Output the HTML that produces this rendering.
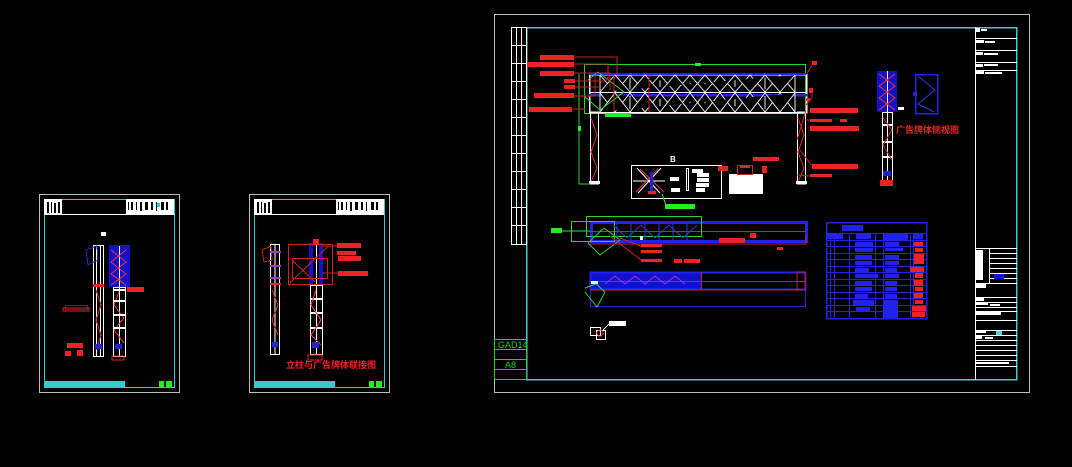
<!DOCTYPE html>
<html><head><meta charset="utf-8"><style>
html,body{margin:0;padding:0;background:#000;}
svg{display:block}
text{font-family:"Liberation Sans","Noto Sans CJK SC",sans-serif}
</style></head><body>
<svg width="1072" height="467" viewBox="0 0 1072 467" xmlns="http://www.w3.org/2000/svg" shape-rendering="crispEdges">
<rect width="1072" height="467" fill="#000"/>

<!-- ============ SHEET 1 ============ -->
<g>
<rect x="39.5" y="194.5" width="140" height="198" fill="none" stroke="#bbb"/>
<rect x="44.5" y="199.5" width="130" height="188" fill="none" stroke="#3cc"/>
<rect x="44" y="199" width="18" height="15" fill="#fff"/>
<g fill="#000"><rect x="47" y="202" width="2" height="11"/><rect x="51" y="202" width="1" height="11"/><rect x="54" y="203" width="2" height="10"/><rect x="58" y="202" width="2" height="11"/></g>
<rect x="126" y="199" width="48" height="15" fill="#fff"/>
<g fill="#000"><rect x="128" y="202" width="1" height="8"/><rect x="131" y="202" width="2" height="8"/><rect x="136" y="202" width="1" height="8"/><rect x="140" y="202" width="2" height="9"/><rect x="145" y="202" width="3" height="8"/><rect x="151" y="202" width="2" height="8"/><rect x="156" y="202" width="1" height="9"/><rect x="161" y="202" width="3" height="8"/><rect x="166" y="202" width="2" height="8"/></g>
<rect x="157" y="203" width="3" height="4" fill="#3cc"/>
<line x1="44" y1="214.5" x2="174" y2="214.5" stroke="#fff"/>
<rect x="44" y="381" width="81" height="6" fill="#3cc"/>
<rect x="159" y="381" width="5" height="7" fill="#2e2"/><rect x="166" y="381" width="6" height="7" fill="#2e2"/>
<rect x="101" y="232" width="5" height="4" fill="#fff"/>
<!-- column 1 -->
<rect x="93.5" y="245.5" width="10" height="111" fill="none" stroke="#fff"/>
<line x1="96.5" y1="246" x2="96.5" y2="356" stroke="#fff"/><line x1="100.5" y1="246" x2="100.5" y2="356" stroke="#fff"/>
<polyline points="86,250 97,246 98,260 88,265 86,250" fill="none" stroke="#22d"/>
<polyline points="96,290 101,305 96,320 101,335 96,350" fill="none" stroke="#d22"/>
<rect x="93" y="284" width="11" height="3" fill="#e22"/>
<rect x="95" y="344" width="7" height="5" fill="#22d"/>
<!-- column 2 -->
<rect x="109" y="245" width="21" height="42" fill="#11c"/>
<rect x="113.5" y="287.5" width="12" height="69" fill="none" stroke="#fff"/>
<line x1="119.5" y1="246" x2="119.5" y2="356" stroke="#fff"/>
<polyline points="111,250 126,262 111,274 126,285" fill="none" stroke="#e33"/>
<polyline points="126,250 111,262 126,274 111,285" fill="none" stroke="#e33"/>
<polyline points="119,292 114,305 124,318 114,330 124,343" fill="none" stroke="#e33"/>
<rect x="113" y="289" width="12" height="2" fill="#fff"/><rect x="113" y="300" width="12" height="2" fill="#fff"/><rect x="113" y="314" width="12" height="2" fill="#fff"/><rect x="113" y="327" width="12" height="2" fill="#fff"/>
<rect x="115" y="344" width="7" height="5" fill="#22d"/>
<rect x="112" y="356" width="12" height="4" fill="none" stroke="#e22"/>
<rect x="127" y="287" width="17" height="5" fill="#e22"/>
<rect x="65.5" y="305.5" width="22" height="4" fill="none" stroke="#22d"/><rect x="63" y="308" width="26" height="3" fill="none" stroke="#e22"/>
<rect x="67" y="343" width="16" height="5" fill="#e22"/>
<rect x="65" y="351" width="6" height="5" fill="#e22"/><rect x="77" y="350" width="6" height="6" fill="#e22"/>
</g>

<!-- ============ SHEET 2 ============ -->
<g>
<rect x="249.5" y="194.5" width="140" height="198" fill="none" stroke="#bbb"/>
<rect x="254.5" y="199.5" width="130" height="188" fill="none" stroke="#3cc"/>
<rect x="254" y="199" width="18" height="15" fill="#fff"/>
<g fill="#000"><rect x="257" y="202" width="2" height="11"/><rect x="261" y="202" width="1" height="11"/><rect x="264" y="203" width="2" height="10"/><rect x="268" y="202" width="2" height="11"/></g>
<rect x="336" y="199" width="48" height="15" fill="#fff"/>
<g fill="#000"><rect x="338" y="202" width="1" height="8"/><rect x="341" y="202" width="2" height="8"/><rect x="346" y="202" width="1" height="8"/><rect x="350" y="202" width="2" height="9"/><rect x="355" y="202" width="3" height="8"/><rect x="361" y="202" width="2" height="8"/><rect x="366" y="202" width="1" height="9"/><rect x="371" y="202" width="3" height="8"/><rect x="376" y="202" width="2" height="8"/></g>
<line x1="254" y1="214.5" x2="384" y2="214.5" stroke="#fff"/>
<rect x="254" y="381" width="81" height="6" fill="#3cc"/>
<rect x="369" y="381" width="5" height="7" fill="#2e2"/><rect x="376" y="381" width="6" height="7" fill="#2e2"/>
<!-- col 1 -->
<rect x="270.5" y="244.5" width="9" height="110" fill="none" stroke="#fff"/>
<line x1="275" y1="245" x2="275" y2="354" stroke="#fff"/>
<polyline points="262,250 271,246 272,260 264,262 262,250" fill="none" stroke="#c22"/>
<rect x="270" y="251" width="11" height="2" fill="#a3c"/><rect x="270" y="265" width="11" height="2" fill="#a3c"/><rect x="270" y="277" width="11" height="2" fill="#a3c"/><rect x="270" y="283" width="11" height="2" fill="#e22"/>
<polyline points="272,290 278,305 272,320 278,335" fill="none" stroke="#d22"/>
<rect x="272" y="342" width="6" height="5" fill="#22d"/>
<!-- col 2 -->
<rect x="309" y="243" width="14" height="42" fill="#11c"/>
<rect x="313" y="244" width="6" height="40" fill="#000"/>
<rect x="310.5" y="285.5" width="12" height="69" fill="none" stroke="#fff"/>
<line x1="316.5" y1="243" x2="316.5" y2="354" stroke="#fff"/>
<rect x="310" y="298" width="12" height="2" fill="#fff"/><rect x="310" y="312" width="12" height="2" fill="#fff"/><rect x="310" y="327" width="12" height="2" fill="#fff"/>
<polyline points="316,290 311,305 321,320 311,335 321,345" fill="none" stroke="#e33"/>
<rect x="288.5" y="244.5" width="44" height="40" fill="none" stroke="#c22"/>
<rect x="292.5" y="258.5" width="35" height="20" fill="none" stroke="#c22"/>
<line x1="290" y1="283" x2="328" y2="246" stroke="#c22"/>
<line x1="292" y1="260" x2="315" y2="282" stroke="#c22"/>
<rect x="313" y="239" width="6" height="5" fill="#e22"/>
<rect x="312" y="342" width="7" height="6" fill="#22d"/>
<rect x="308" y="355" width="14" height="5" fill="none" stroke="#e22"/>
<rect x="337" y="243" width="24" height="5" fill="#e22"/>
<rect x="337" y="251" width="19" height="4" fill="#e22"/>
<rect x="338" y="256" width="23" height="5" fill="#e22"/>
<rect x="338" y="271" width="30" height="5" fill="#e22"/>
<line x1="322" y1="246" x2="337" y2="246" stroke="#c22"/><line x1="322" y1="273" x2="338" y2="273" stroke="#c22"/>
<text x="286" y="368" font-size="9" font-weight="bold" fill="#e22" font-family="'Liberation Sans','Noto Sans CJK SC',sans-serif">立柱与广告牌体联接图</text>
</g>

<!-- ============ MAIN SHEET ============ -->
<g>
<rect x="494.5" y="14.5" width="535" height="378" fill="none" stroke="#bbb"/>
<rect x="526.5" y="27.5" width="490" height="352" fill="none" stroke="#4cc" stroke-width="1.5"/>
<!-- left strip -->
<rect x="511.5" y="27.5" width="15" height="217" fill="none" stroke="#fff"/>
<line x1="516.5" y1="28" x2="516.5" y2="244" stroke="#fff"/><line x1="521.5" y1="28" x2="521.5" y2="244" stroke="#fff"/>
<g stroke="#fff">
<line x1="511" y1="45.5" x2="526" y2="45.5"/><line x1="511" y1="63.5" x2="526" y2="63.5"/><line x1="511" y1="81.5" x2="526" y2="81.5"/><line x1="511" y1="99.5" x2="526" y2="99.5"/><line x1="511" y1="117.5" x2="526" y2="117.5"/><line x1="511" y1="135.5" x2="526" y2="135.5"/><line x1="511" y1="153.5" x2="526" y2="153.5"/><line x1="511" y1="171.5" x2="526" y2="171.5"/><line x1="511" y1="189.5" x2="526" y2="189.5"/><line x1="511" y1="207.5" x2="526" y2="207.5"/><line x1="511" y1="225.5" x2="526" y2="225.5"/>
</g>
<!-- GAD14 block -->
<rect x="494.5" y="339.5" width="32" height="40" fill="none" stroke="#2c2"/>
<line x1="494" y1="349.5" x2="526" y2="349.5" stroke="#2c2"/><line x1="494" y1="359.5" x2="526" y2="359.5" stroke="#2c2"/><line x1="494" y1="369.5" x2="526" y2="369.5" stroke="#2c2"/>
<text x="498" y="348" font-size="9" fill="#2c2" font-family="'Liberation Mono',monospace">GAD14</text>
<text x="505" y="368" font-size="9" fill="#2c2" font-family="'Liberation Mono',monospace">A8</text>
<!-- title block -->
<line x1="975.5" y1="27" x2="975.5" y2="380" stroke="#fff"/>
<g stroke="#fff"><line x1="975" y1="38.5" x2="1017" y2="38.5"/><line x1="975" y1="50.5" x2="1017" y2="50.5"/><line x1="975" y1="62.5" x2="1017" y2="62.5"/><line x1="975" y1="70.5" x2="1017" y2="70.5"/>
<line x1="975" y1="248.5" x2="1017" y2="248.5"/><line x1="989.5" y1="248" x2="989.5" y2="283"/><line x1="989" y1="253.5" x2="1017" y2="253.5"/><line x1="989" y1="258.5" x2="1017" y2="258.5"/><line x1="989" y1="263.5" x2="1017" y2="263.5"/><line x1="989" y1="268.5" x2="1017" y2="268.5"/><line x1="989" y1="273.5" x2="1017" y2="273.5"/><line x1="989" y1="278.5" x2="1017" y2="278.5"/><line x1="975" y1="283.5" x2="1017" y2="283.5"/>
<line x1="975" y1="297.5" x2="1017" y2="297.5"/><line x1="975" y1="302.5" x2="1017" y2="302.5"/><line x1="975" y1="307.5" x2="1017" y2="307.5"/><line x1="975" y1="311.5" x2="1017" y2="311.5"/><line x1="975" y1="320.5" x2="1017" y2="320.5"/><line x1="975" y1="330.5" x2="1017" y2="330.5"/><line x1="975" y1="335.5" x2="1017" y2="335.5"/><line x1="975" y1="340.5" x2="1017" y2="340.5"/><line x1="975" y1="345.5" x2="1017" y2="345.5"/><line x1="975" y1="350.5" x2="1017" y2="350.5"/><line x1="975" y1="355.5" x2="1017" y2="355.5"/><line x1="975" y1="360.5" x2="1017" y2="360.5"/><line x1="975" y1="366.5" x2="1017" y2="366.5"/></g>
<g fill="#fff"><rect x="976" y="28" width="4" height="4"/><rect x="981" y="29" width="6" height="2"/><rect x="976" y="40" width="8" height="3"/><rect x="985" y="41" width="10" height="2"/><rect x="976" y="52" width="7" height="3"/><rect x="984" y="53" width="14" height="2"/><rect x="976" y="64" width="7" height="3"/><rect x="984" y="64" width="14" height="2"/><rect x="976" y="71" width="8" height="3"/><rect x="985" y="72" width="17" height="2"/>
<rect x="976" y="250" width="7" height="30"/><rect x="976" y="284" width="10" height="4"/><rect x="976" y="298" width="8" height="3"/><rect x="976" y="303" width="12" height="2"/><rect x="990" y="304" width="10" height="2"/><rect x="976" y="312" width="25" height="3"/><rect x="976" y="331" width="10" height="2"/><rect x="976" y="336" width="6" height="3"/><rect x="985" y="337" width="8" height="2"/><rect x="976" y="362" width="33" height="2"/></g>
<rect x="994" y="274" width="10" height="5" fill="#11d"/>
<rect x="996" y="331" width="6" height="4" fill="#4dd"/>
<!-- truss -->
<rect x="584.5" y="64.5" width="221" height="49" fill="none" stroke="#3c3"/>
<rect x="589.5" y="74.5" width="217" height="38" fill="none" stroke="#fff" stroke-width="1.5"/>
<line x1="589" y1="74" x2="806" y2="74" stroke="#22e" stroke-width="2"/>
<line x1="589" y1="92.5" x2="806" y2="92.5" stroke="#fff"/>
<line x1="589" y1="95" x2="808" y2="95" stroke="#22e" stroke-width="2.5"/>
<g stroke="#fff" stroke-width="0.9" shape-rendering="auto">
<path d="M600 75V112M615 75V112M630 75V112M645 75V112M660 75V112M675 75V112M690 75V112M705 75V112M720 75V112M735 75V112M750 75V112M765 75V112M780 75V112M795 75V112"/>
<path d="M600 75L615 92L630 75L645 92L660 75L675 92L690 75L705 92L720 75L735 92L750 75L765 92L780 75L795 92"/>
<path d="M600 92L615 75L630 92L645 75L660 92L675 75L690 92L705 75L720 92L735 75L750 92L765 75L780 92L795 75"/>
<path d="M600 93L615 112L630 93L645 112L660 93L675 112L690 93L705 112L720 93L735 112L750 93L765 112L780 93L795 112"/>
<path d="M600 112L615 93L630 112L645 93L660 112L675 93L690 112L705 93L720 112L735 93L750 112L765 93L780 112L795 93"/>
</g>
<!-- columns -->
<rect x="590.5" y="112" width="8" height="72" fill="none" stroke="#fff"/>
<rect x="797.5" y="112" width="8" height="72" fill="none" stroke="#fff"/>
<polyline points="591,118 597,135 591,152 597,168 591,182" fill="none" stroke="#d22"/>
<polyline points="798,118 804,135 798,152 804,168 798,182" fill="none" stroke="#d22"/>
<rect x="589" y="181" width="11" height="3" fill="#fff"/><rect x="796" y="181" width="11" height="3" fill="#fff"/>
<polyline points="579,74 579,184 590,184" fill="none" stroke="#3c3"/>
<rect x="605" y="113" width="26" height="4" fill="#2e2"/>
<rect x="695" y="63" width="6" height="3" fill="#2e2"/>
<rect x="578" y="126" width="3" height="5" fill="#2e2"/>
<polyline points="588,80 598,72 624,92 600,110 584,96" fill="none" stroke="#3c3" shape-rendering="auto"/>
<g stroke="#c22" fill="none"><path d="M574 57H617V75M574 64H608V80M574 73H610V90M575 81H605M575 87H600M574 96H595V75M573 109H585"/><path d="M614 75V112M649 75V112"/></g>
<!-- red labels left -->
<g fill="#e22"><rect x="540" y="55" width="34" height="5"/><rect x="527" y="62" width="47" height="5"/><rect x="540" y="71" width="34" height="5"/><rect x="564" y="79" width="11" height="4"/><rect x="564" y="85" width="11" height="4"/><rect x="534" y="93" width="40" height="5"/><rect x="529" y="107" width="43" height="5"/></g>
<g fill="#e22"><rect x="810" y="108" width="48" height="5"/><rect x="810" y="119" width="22" height="3"/><rect x="840" y="119" width="7" height="3"/><rect x="810" y="126" width="49" height="5"/><rect x="812" y="164" width="46" height="5"/><rect x="810" y="174" width="22" height="3"/><rect x="812" y="61" width="5" height="4"/><rect x="809" y="88" width="4" height="5"/><rect x="806" y="98" width="4" height="3"/></g>
<g stroke="#c22" fill="none" shape-rendering="auto"><path d="M806 105L812 98L812 88M806 75L812 65M806 110L797 140M805 120L810 120M800 150L812 166M797 175L810 176"/></g>
<!-- detail B -->
<text x="670" y="162" font-size="8" font-weight="bold" fill="#fff">B</text>
<rect x="631.5" y="165.5" width="90" height="33" fill="none" stroke="#fff"/>
<g stroke="#fff" shape-rendering="auto"><path d="M637 168L660 193M661 168L638 193M633 181H665"/></g>
<g stroke="#e33" shape-rendering="auto"><path d="M640 169L664 192M658 169L636 192"/></g>
<rect x="650" y="172" width="3" height="20" fill="#22d"/><rect x="648" y="191" width="8" height="3" fill="#e22"/>
<rect x="670" y="177" width="9" height="4" fill="#fff"/><rect x="671" y="188" width="9" height="4" fill="#fff"/>
<rect x="686.5" y="168.5" width="2" height="22" fill="none" stroke="#fff"/>
<g fill="#fff"><rect x="692" y="169" width="11" height="4"/><rect x="697" y="173" width="12" height="4"/><rect x="697" y="178" width="12" height="4"/><rect x="696" y="183" width="13" height="4"/><rect x="696" y="188" width="9" height="4"/></g>
<rect x="665" y="204" width="30" height="5" fill="#2e2"/>
<line x1="662" y1="194" x2="666" y2="205" stroke="#2e2"/>
<rect x="729" y="174" width="34" height="20" fill="#fff"/>
<rect x="718" y="166" width="10" height="5" fill="#e22"/>
<rect x="753" y="157" width="26" height="4" fill="#e22"/>
<rect x="740" y="165" width="10" height="3" fill="#e22"/>
<rect x="762" y="166" width="5" height="7" fill="#e22"/>
<rect x="737.5" y="165.5" width="15" height="9" fill="none" stroke="#c22"/>
<!-- side elevation -->
<rect x="877" y="71" width="20" height="41" fill="#11c"/>
<rect x="882.5" y="112.5" width="10" height="72" fill="none" stroke="#fff"/>
<line x1="887.5" y1="71" x2="887.5" y2="184" stroke="#fff"/>
<polyline points="879,74 895,86 879,98 895,110" fill="none" stroke="#e33" shape-rendering="auto"/>
<polyline points="895,74 879,86 895,98 879,110" fill="none" stroke="#e33" shape-rendering="auto"/>
<rect x="882" y="124" width="11" height="2" fill="#fff"/><rect x="882" y="141" width="11" height="2" fill="#fff"/><rect x="882" y="156" width="11" height="2" fill="#fff"/>
<polyline points="883,118 892,130 883,145 892,160" fill="none" stroke="#d22"/>
<rect x="883" y="171" width="8" height="5" fill="#22d"/>
<rect x="880" y="180" width="13" height="6" fill="#e22"/>
<rect x="915.5" y="74.5" width="22" height="39" fill="none" stroke="#22e" stroke-width="1.5"/>
<rect x="913" y="92" width="4" height="4" fill="#22e"/>
<polyline points="918,76 935,90 918,104 934,112" fill="none" stroke="#33e" shape-rendering="auto"/>
<rect x="898" y="107" width="6" height="3" fill="#fff"/>
<text x="896" y="133" font-size="9" font-weight="bold" fill="#e22" font-family="'Liberation Sans','Noto Sans CJK SC',sans-serif">广告牌体侧视图</text>
<!-- plan 1 -->
<rect x="591.5" y="222.5" width="215" height="19" fill="none" stroke="#22e" stroke-width="3"/>
<line x1="590" y1="231.5" x2="806" y2="231.5" stroke="#c22"/>
<rect x="571.5" y="221.5" width="43" height="20" fill="none" stroke="#3c3"/>
<rect x="586.5" y="216.5" width="115" height="20" fill="none" stroke="#3c3"/>
<rect x="551" y="228" width="11" height="5" fill="#2e2"/>
<line x1="562" y1="231" x2="590" y2="231" stroke="#2e2"/>
<g stroke="#33e" shape-rendering="auto" fill="none"><path d="M613 225L627 238L641 225L655 238L669 225L683 238L697 225"/></g>
<g stroke="#33e"><path d="M617 223V241M631 223V241M645 223V241M659 223V241M673 223V241M687 223V241"/></g>
<polyline points="588,243 600,255 620,240 604,228 588,243" fill="none" stroke="#3c3" shape-rendering="auto"/>
<rect x="640" y="236" width="3" height="4" fill="#fff"/><rect x="750" y="233" width="6" height="5" fill="#e22"/>
<polyline points="590,244 806,244 806,234" fill="none" stroke="#c22"/>
<g fill="#e22"><rect x="641" y="244" width="21" height="3"/><rect x="641" y="250" width="21" height="3"/><rect x="641" y="259" width="21" height="3"/><rect x="674" y="259" width="8" height="4"/><rect x="684" y="259" width="16" height="4"/><rect x="719" y="238" width="26" height="5"/><rect x="777" y="247" width="6" height="3"/></g>
<g stroke="#c22" shape-rendering="auto"><path d="M610 236L641 260M620 238L641 246"/></g>
<!-- plan 2 -->
<rect x="590" y="272" width="112" height="17" fill="#11c"/>
<rect x="590.5" y="272.5" width="215" height="17" fill="none" stroke="#22e" stroke-width="2"/>
<rect x="590.5" y="289.5" width="215" height="17" fill="none" stroke="#22e"/>
<line x1="590" y1="281.5" x2="806" y2="281.5" stroke="#c22"/>
<line x1="590" y1="290" x2="806" y2="290" stroke="#c22"/>
<line x1="701.5" y1="272" x2="701.5" y2="290" stroke="#c22"/>
<g stroke="#a3d" shape-rendering="auto" fill="none"><path d="M605 284L615 276L625 284L635 276L645 284L655 276L665 284L675 276L685 284"/></g>
<rect x="591" y="281" width="7" height="3" fill="#fff"/>
<polyline points="585,288 596,284 605,292 597,307 585,292" fill="none" stroke="#3c3" shape-rendering="auto"/>
<rect x="797" y="272" width="8" height="18" fill="none" stroke="#c22"/>
<!-- small detail -->
<rect x="590.5" y="327.5" width="10" height="8" fill="none" stroke="#fff"/>
<rect x="596.5" y="330.5" width="9" height="9" fill="none" stroke="#fff"/>
<circle cx="600" cy="333" r="3" fill="none" stroke="#e22"/>
<rect x="609" y="321" width="17" height="5" fill="#fff"/>
<line x1="603" y1="330" x2="609" y2="324" stroke="#fff"/>
<!-- table -->
<rect x="826.5" y="222.5" width="100" height="96" fill="none" stroke="#22e" stroke-width="1.5"/>
<line x1="826" y1="233.5" x2="927" y2="233.5" stroke="#22e"/>
<rect x="842" y="225" width="21" height="6" fill="#22e"/>
<g stroke="#22e">
<line x1="830.5" y1="234" x2="830.5" y2="318"/><line x1="834.5" y1="234" x2="834.5" y2="318"/><line x1="849.5" y1="234" x2="849.5" y2="318"/><line x1="875.5" y1="234" x2="875.5" y2="318"/><line x1="883.5" y1="234" x2="883.5" y2="318"/><line x1="910.5" y1="234" x2="910.5" y2="318"/><line x1="913.5" y1="234" x2="913.5" y2="318"/>
<line x1="826" y1="240.5" x2="927" y2="240.5"/><line x1="826" y1="246.5" x2="927" y2="246.5"/><line x1="826" y1="253.5" x2="927" y2="253.5"/><line x1="826" y1="259.5" x2="927" y2="259.5"/><line x1="826" y1="266.5" x2="927" y2="266.5"/><line x1="826" y1="272.5" x2="927" y2="272.5"/><line x1="826" y1="279.5" x2="927" y2="279.5"/><line x1="826" y1="285.5" x2="927" y2="285.5"/><line x1="826" y1="292.5" x2="927" y2="292.5"/><line x1="826" y1="298.5" x2="927" y2="298.5"/><line x1="826" y1="305.5" x2="927" y2="305.5"/><line x1="826" y1="311.5" x2="927" y2="311.5"/>
</g>
<g fill="#22e"><rect x="827" y="234" width="16" height="5"/><rect x="856" y="234" width="15" height="5"/><rect x="883" y="234" width="25" height="6"/><rect x="913" y="234" width="10" height="5"/>
<rect x="855" y="242" width="18" height="4"/><rect x="855" y="248" width="18" height="4"/><rect x="855" y="255" width="17" height="4"/><rect x="855" y="261" width="17" height="4"/><rect x="855" y="268" width="14" height="4"/><rect x="855" y="274" width="23" height="4"/><rect x="855" y="281" width="17" height="4"/><rect x="855" y="287" width="17" height="4"/><rect x="855" y="294" width="13" height="4"/><rect x="853" y="300" width="21" height="6"/><rect x="856" y="307" width="14" height="4"/>
<rect x="885" y="242" width="14" height="4"/><rect x="885" y="248" width="18" height="3"/><rect x="885" y="255" width="14" height="4"/><rect x="885" y="261" width="14" height="4"/><rect x="885" y="268" width="12" height="4"/><rect x="885" y="274" width="14" height="4"/><rect x="885" y="281" width="12" height="4"/><rect x="885" y="287" width="12" height="4"/><rect x="885" y="294" width="12" height="4"/><rect x="884" y="300" width="14" height="18"/></g>
<g fill="#e22"><rect x="914" y="242" width="9" height="4"/><rect x="915" y="248" width="8" height="4"/><rect x="914" y="254" width="10" height="10"/><rect x="910" y="267" width="14" height="5"/><rect x="915" y="273" width="8" height="5"/><rect x="914" y="280" width="9" height="6"/><rect x="915" y="287" width="8" height="4"/><rect x="914" y="293" width="9" height="5"/><rect x="915" y="300" width="8" height="4"/><rect x="912" y="306" width="14" height="5"/><rect x="912" y="312" width="13" height="5"/></g>
</g>
</svg>
</body></html>
